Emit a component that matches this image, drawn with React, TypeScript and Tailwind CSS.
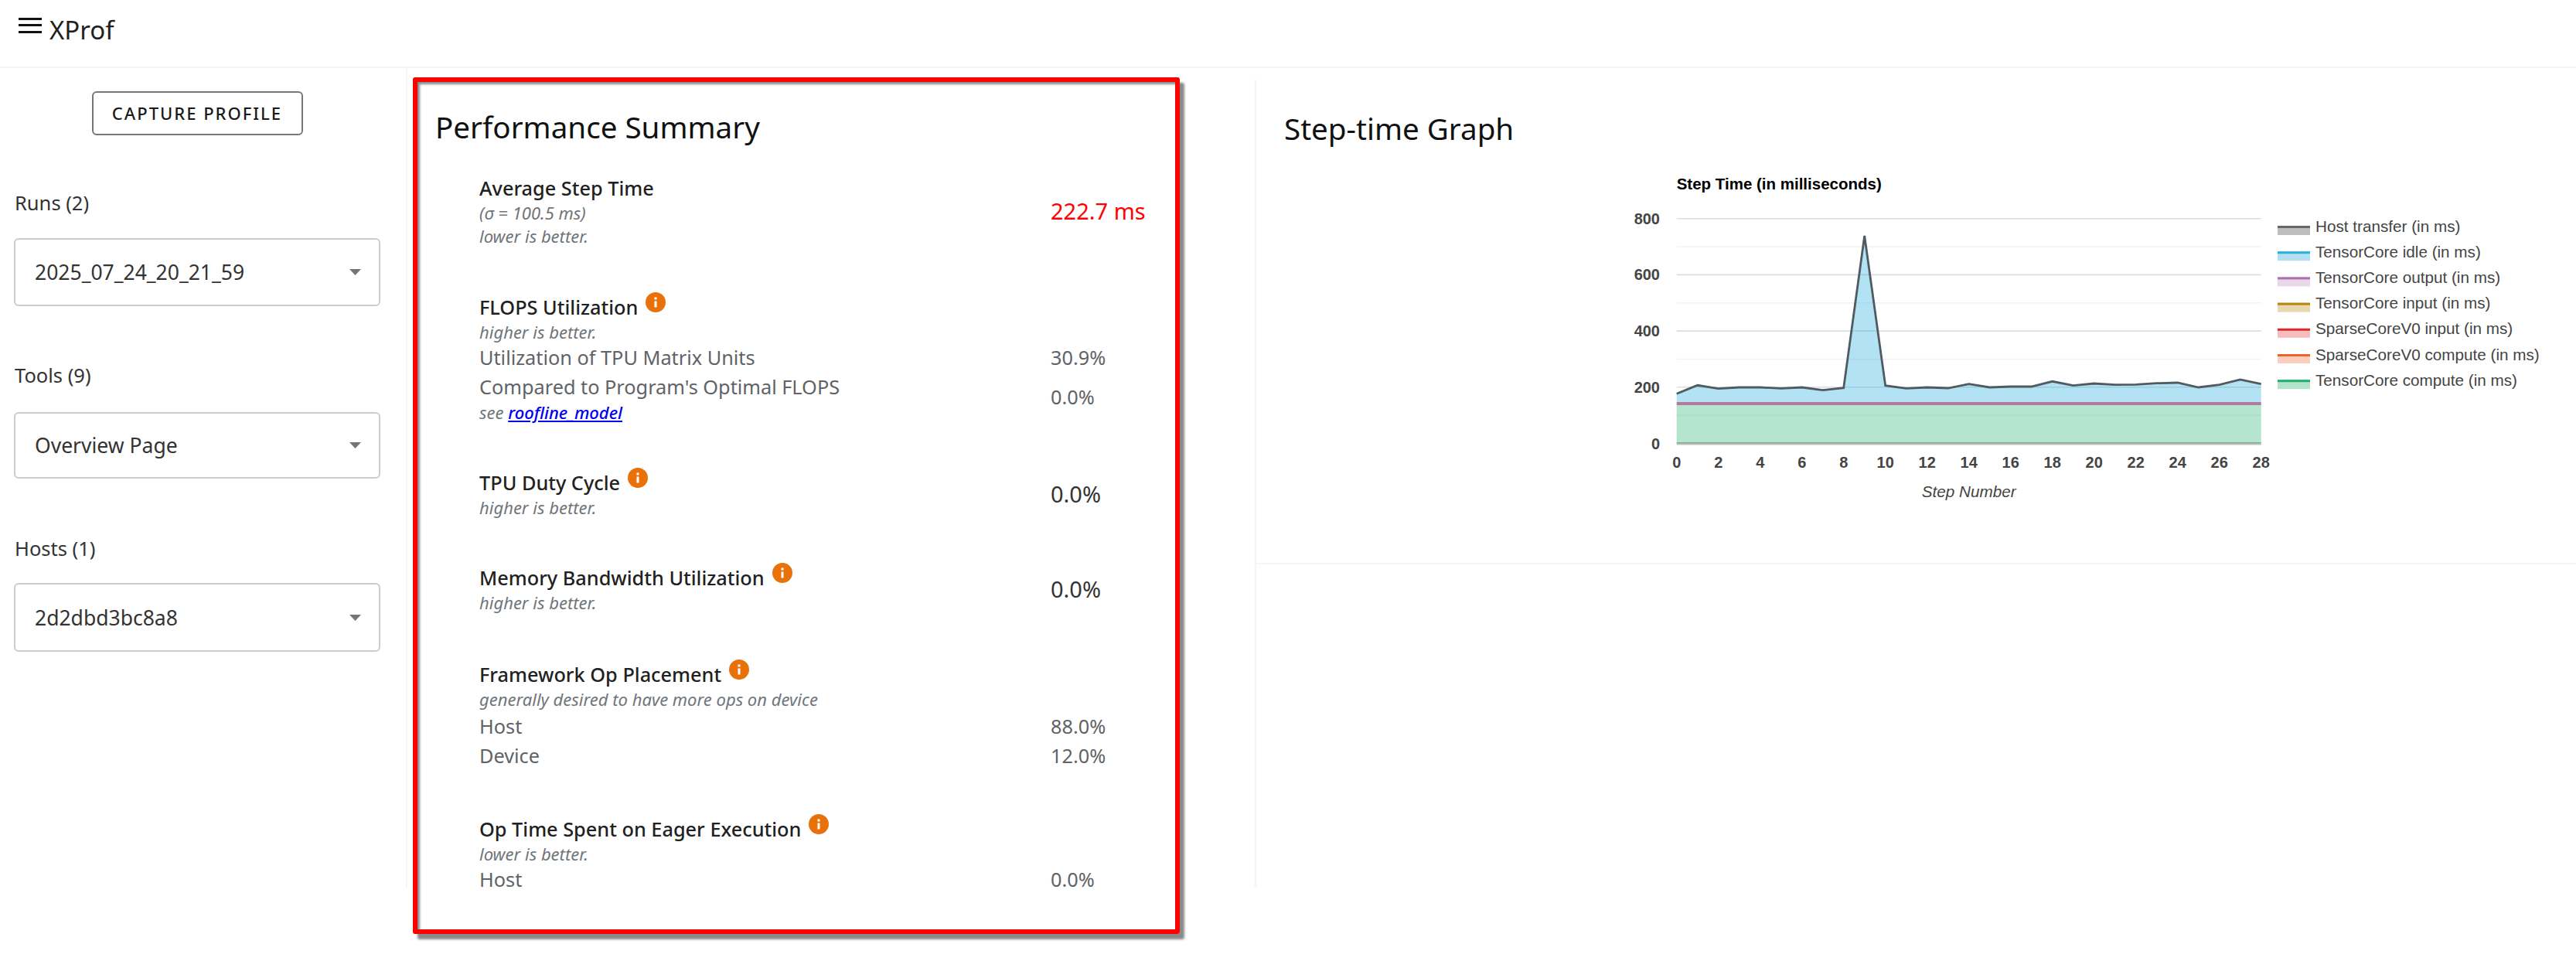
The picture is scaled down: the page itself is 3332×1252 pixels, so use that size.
import React from 'react';

const NOTO = 'font-["Noto_Sans",sans-serif]';

// Chart geometry, in the svg's own pixels
const X0 = 88.7;
const STEP = 27;
const Y_BOTTOM = 353.5;
const Y_PER_100 = 36.35;
const OUTPUT_TOP = 300;
const COMPUTE_TOP = 304;

// y pixel of the stacked total at each step
const TOTALS = [
  289.3, 278.3, 282.7, 281, 281, 282.3, 281, 284.7, 281.7, 85, 278.7, 282.3, 281, 282, 276.7, 281, 280,
  280, 273.3, 278.7, 276, 277.7, 277.3, 275.7, 275, 281, 277.7, 271, 276.7,
];

const linePoints = TOTALS.map((y, i) => `${X0 + i * STEP},${y}`).join(' ');
const X_END = X0 + 28 * STEP;

const LEGEND = [
  { label: 'Host transfer (in ms)', stroke: '#666666', fill: '#bdbdbd' },
  { label: 'TensorCore idle (in ms)', stroke: '#2bb0e0', fill: '#b2e0f0' },
  { label: 'TensorCore output (in ms)', stroke: '#ad6fb0', fill: '#e8d8ea' },
  { label: 'TensorCore input (in ms)', stroke: '#b8860b', fill: '#e8d8b0' },
  { label: 'SparseCoreV0 input (in ms)', stroke: '#e0282e', fill: '#f4bcbc' },
  { label: 'SparseCoreV0 compute (in ms)', stroke: '#f0622a', fill: '#fbcfbd' },
  { label: 'TensorCore compute (in ms)', stroke: '#1fb06a', fill: '#b3e3ca' },
];

const StepChart: React.FC = () => {
  const xTicks = Array.from({ length: 15 }, (_, i) => i * 2);
  const gridMajor = [800, 600, 400, 200];
  const gridMinor = [700, 500, 300, 100];
  const yOf = (v: number) => Y_BOTTOM - (v / 100) * Y_PER_100;
  const textFont = { fontFamily: '"Liberation Sans", Arial, sans-serif' };

  return (
    <svg width="1250" height="440" style={textFont} className="ml-[455px] mt-[29px] block">
      <text x={X0} y="25" fontSize="20.5" fontWeight="700" fill="#000">
        Step Time (in milliseconds)
      </text>

      {gridMajor.map((v) => (
        <line key={v} x1={X0} x2={X_END} y1={yOf(v)} y2={yOf(v)} stroke="#dddddd" strokeWidth="1.6" />
      ))}
      {gridMinor.map((v) => (
        <line key={v} x1={X0} x2={X_END} y1={yOf(v)} y2={yOf(v)} stroke="#f3f3f3" strokeWidth="1.6" />
      ))}

      {/* stacked areas */}
      <polygon
        points={`${X0},${OUTPUT_TOP} ${linePoints} ${X_END},${OUTPUT_TOP}`}
        fill="#2bb0e0"
        fillOpacity="0.36"
      />
      <rect x={X0} y={OUTPUT_TOP} width={X_END - X0} height={COMPUTE_TOP - OUTPUT_TOP} fill="#b27a9b" />
      <rect x={X0} y={COMPUTE_TOP} width={X_END - X0} height={Y_BOTTOM - COMPUTE_TOP} fill="#1fb06a" fillOpacity="0.33" />
      <polyline points={linePoints} fill="none" stroke="#4f5b60" strokeWidth="2.8" />
      <line x1={X0} x2={X_END} y1={Y_BOTTOM - 0.5} y2={Y_BOTTOM - 0.5} stroke="#6f9684" strokeWidth="1.4" />
      <line x1={X0} x2={X_END} y1={Y_BOTTOM + 1} y2={Y_BOTTOM + 1} stroke="#c0c0c0" strokeWidth="1.8" />

      {[800, 600, 400, 200, 0].map((v) => (
        <text key={v} x="67" y={yOf(v) + 7} fontSize="20" fontWeight="700" fill="#444444" textAnchor="end">
          {v}
        </text>
      ))}
      {xTicks.map((t) => (
        <text key={t} x={X0 + t * STEP} y="385" fontSize="20" fontWeight="700" fill="#444444" textAnchor="middle">
          {t}
        </text>
      ))}
      <text x={X0 + 14 * STEP} y="423" fontSize="20.7" fontStyle="italic" fill="#444444" textAnchor="middle">
        Step Number
      </text>

      {LEGEND.map((item, i) => {
        const cy = 73 + i * 33.2;
        return (
          <g key={item.label}>
            <rect x="866" y={cy - 1} width="42" height="12" fill={item.fill} />
            <rect x="866" y={cy - 1} width="42" height="3" fill={item.stroke} />
            <text x="915" y={cy + 6.5} fontSize="20.7" fill="#444444">
              {item.label}
            </text>
          </g>
        );
      })}
    </svg>
  );
};

const InfoIcon: React.FC = () => (
  <svg width="26" height="26" viewBox="0 0 26 26" className="ml-[10px] -mt-[12px] shrink-0">
    <circle cx="13" cy="13" r="13" fill="#e8710a" />
    <rect x="11.5" y="11.5" width="3" height="8" fill="#ffffff" />
    <rect x="11.5" y="6.5" width="3" height="3" fill="#ffffff" />
  </svg>
);

const Caret: React.FC = () => (
  <svg width="15" height="8" viewBox="0 0 15 8" className="shrink-0">
    <polygon points="0,0 15,0 7.5,8" fill="#757575" />
  </svg>
);

const SelectBox: React.FC<{ value: string; className: string }> = ({ value, className }) => (
  <div
    className={`flex items-center justify-between rounded-[6px] border-2 border-[#cccccc] pl-[25px] pr-[23px] text-[26.5px] text-[#333333] ${className}`}
  >
    <span className="pt-[2px]">{value}</span>
    <Caret />
  </div>
);

type SectionProps = {
  title: string;
  info?: boolean;
  value?: string;
  valueClass?: string;
  className: string;
  children?: React.ReactNode;
};

const Title: React.FC<{ text: string; info?: boolean }> = ({ text, info }) => (
  <div className="flex items-center h-[34px] text-[25.3px] leading-[34px] font-medium text-[#212121] whitespace-nowrap">
    {text}
    {info && <InfoIcon />}
  </div>
);

const Note: React.FC<{ children: React.ReactNode }> = ({ children }) => (
  <div className="h-[30px] text-[22px] leading-[30px] italic text-[#70757a] whitespace-nowrap">{children}</div>
);

const Row: React.FC<{ label: string; value: string; note?: React.ReactNode }> = ({ label, value, note }) => (
  <div className="flex items-center text-[25.3px] text-[#5f6368]">
    <div className="w-[739px]">
      <div className="h-[37px] leading-[37px] whitespace-nowrap">{label}</div>
      {note}
    </div>
    <div>{value}</div>
  </div>
);

const Section: React.FC<SectionProps> = ({ title, info, value, valueClass, className, children }) => (
  <div className={className}>
    {value ? (
      <div className="flex items-center">
        <div className="w-[739px]">
          <Title text={title} info={info} />
          {children}
        </div>
        <div className={valueClass}>{value}</div>
      </div>
    ) : (
      <>
        <Title text={title} info={info} />
        {children}
      </>
    )}
  </div>
);

const App: React.FC = () => {
  return (
    <div className={`w-[3332px] h-[1252px] bg-white overflow-hidden ${NOTO}`}>
      <header className="h-[88px] border-b-2 border-[#f5f5f5] flex items-start pl-[24px] pt-[23px]">
        <svg width="30" height="20" viewBox="0 0 30 20" className="shrink-0">
          <rect width="30" height="3" fill="#111111" />
          <rect y="8" width="30" height="3" fill="#111111" />
          <rect y="17" width="30" height="3" fill="#111111" />
        </svg>
        <span className="ml-[10px] -mt-[4px] text-[33px] leading-[40px] text-[#212121]">XProf</span>
      </header>

      <div className="flex items-start">
        {/* Sidebar */}
        <aside className="w-[527px] h-[1060px] border-r-2 border-[#f5f5f5] pl-[18px] pr-[33px] shrink-0">
          <div className="flex justify-center pt-[30px]">
            <button className="w-[273px] h-[57px] rounded-[6px] border-2 border-[#777777] text-[22px] font-medium tracking-[2px] text-[#1a1a1a]">
              CAPTURE PROFILE
            </button>
          </div>
          <div className="mt-[71px] ml-[1px] text-[25.5px] leading-[32px] text-[#333333]">Runs (2)</div>
          <SelectBox value="2025_07_24_20_21_59" className="mt-[30px] h-[88px]" />
          <div className="mt-[73px] ml-[1px] text-[25.5px] leading-[32px] text-[#333333]">Tools (9)</div>
          <SelectBox value="Overview Page" className="mt-[32px] h-[86px]" />
          <div className="mt-[74px] ml-[1px] text-[25.5px] leading-[32px] text-[#333333]">Hosts (1)</div>
          <SelectBox value="2d2dbd3bc8a8" className="mt-[29px] h-[89px]" />
        </aside>

        {/* Performance Summary */}
        <section className="ml-[7px] mt-[12px] w-[992px] h-[1108px] shrink-0 rounded-[3px] border-[6px] border-[#ff0000] shadow-[6px_7px_3px_#8a8a8a,inset_3px_3px_3px_#8a8a8a] pl-[23px] pt-[33px]">
          <h2 className="h-[50px] text-[38.6px] leading-[50px] text-[#111111]">Performance Summary</h2>
          <div className="pl-[57px]">
            <Section
              title="Average Step Time"
              value="222.7 ms"
              valueClass="text-[29px] text-[#ff0000]"
              className="mt-[37px]"
            >
              <Note>(σ = 100.5 ms)</Note>
              <Note>lower is better.</Note>
            </Section>

            <Section title="FLOPS Utilization" info className="mt-[60px]">
              <Note>higher is better.</Note>
              <Row label="Utilization of TPU Matrix Units" value="30.9%" />
              <Row
                label="Compared to Program's Optimal FLOPS"
                value="0.0%"
                note={
                  <div className="h-[28px] text-[22px] leading-[28px] italic text-[#70757a]">
                    see <a className="text-[#0000ee] underline font-medium">roofline_model</a>
                  </div>
                }
              />
            </Section>

            <Section
              title="TPU Duty Cycle"
              info
              value="0.0%"
              valueClass="text-[29px] text-[#333333]"
              className="mt-[60px]"
            >
              <Note>higher is better.</Note>
            </Section>

            <Section
              title="Memory Bandwidth Utilization"
              info
              value="0.0%"
              valueClass="text-[29px] text-[#333333]"
              className="mt-[59px]"
            >
              <Note>higher is better.</Note>
            </Section>

            <Section title="Framework Op Placement" info className="mt-[61px]">
              <Note>generally desired to have more ops on device</Note>
              <div className="mt-[2px]">
                <Row label="Host" value="88.0%" />
                <Row label="Device" value="12.0%" />
              </div>
            </Section>

            <Section title="Op Time Spent on Eager Execution" info className="mt-[58px]">
              <Note>lower is better.</Note>
              <Row label="Host" value="0.0%" />
            </Section>
          </div>
        </section>

        {/* Step-time Graph */}
        <section className="ml-[97px] mt-[15px] flex-1 h-[1045px] border-l-2 border-[#f5f5f5]">
          <div className="h-[627px] border-b-2 border-[#f5f5f5]">
            <h2 className="pl-[36px] pt-[38px] h-[88px] text-[38.6px] leading-[50px] text-[#111111]">Step-time Graph</h2>
            <StepChart />
          </div>
        </section>
      </div>
    </div>
  );
};

export default App;
